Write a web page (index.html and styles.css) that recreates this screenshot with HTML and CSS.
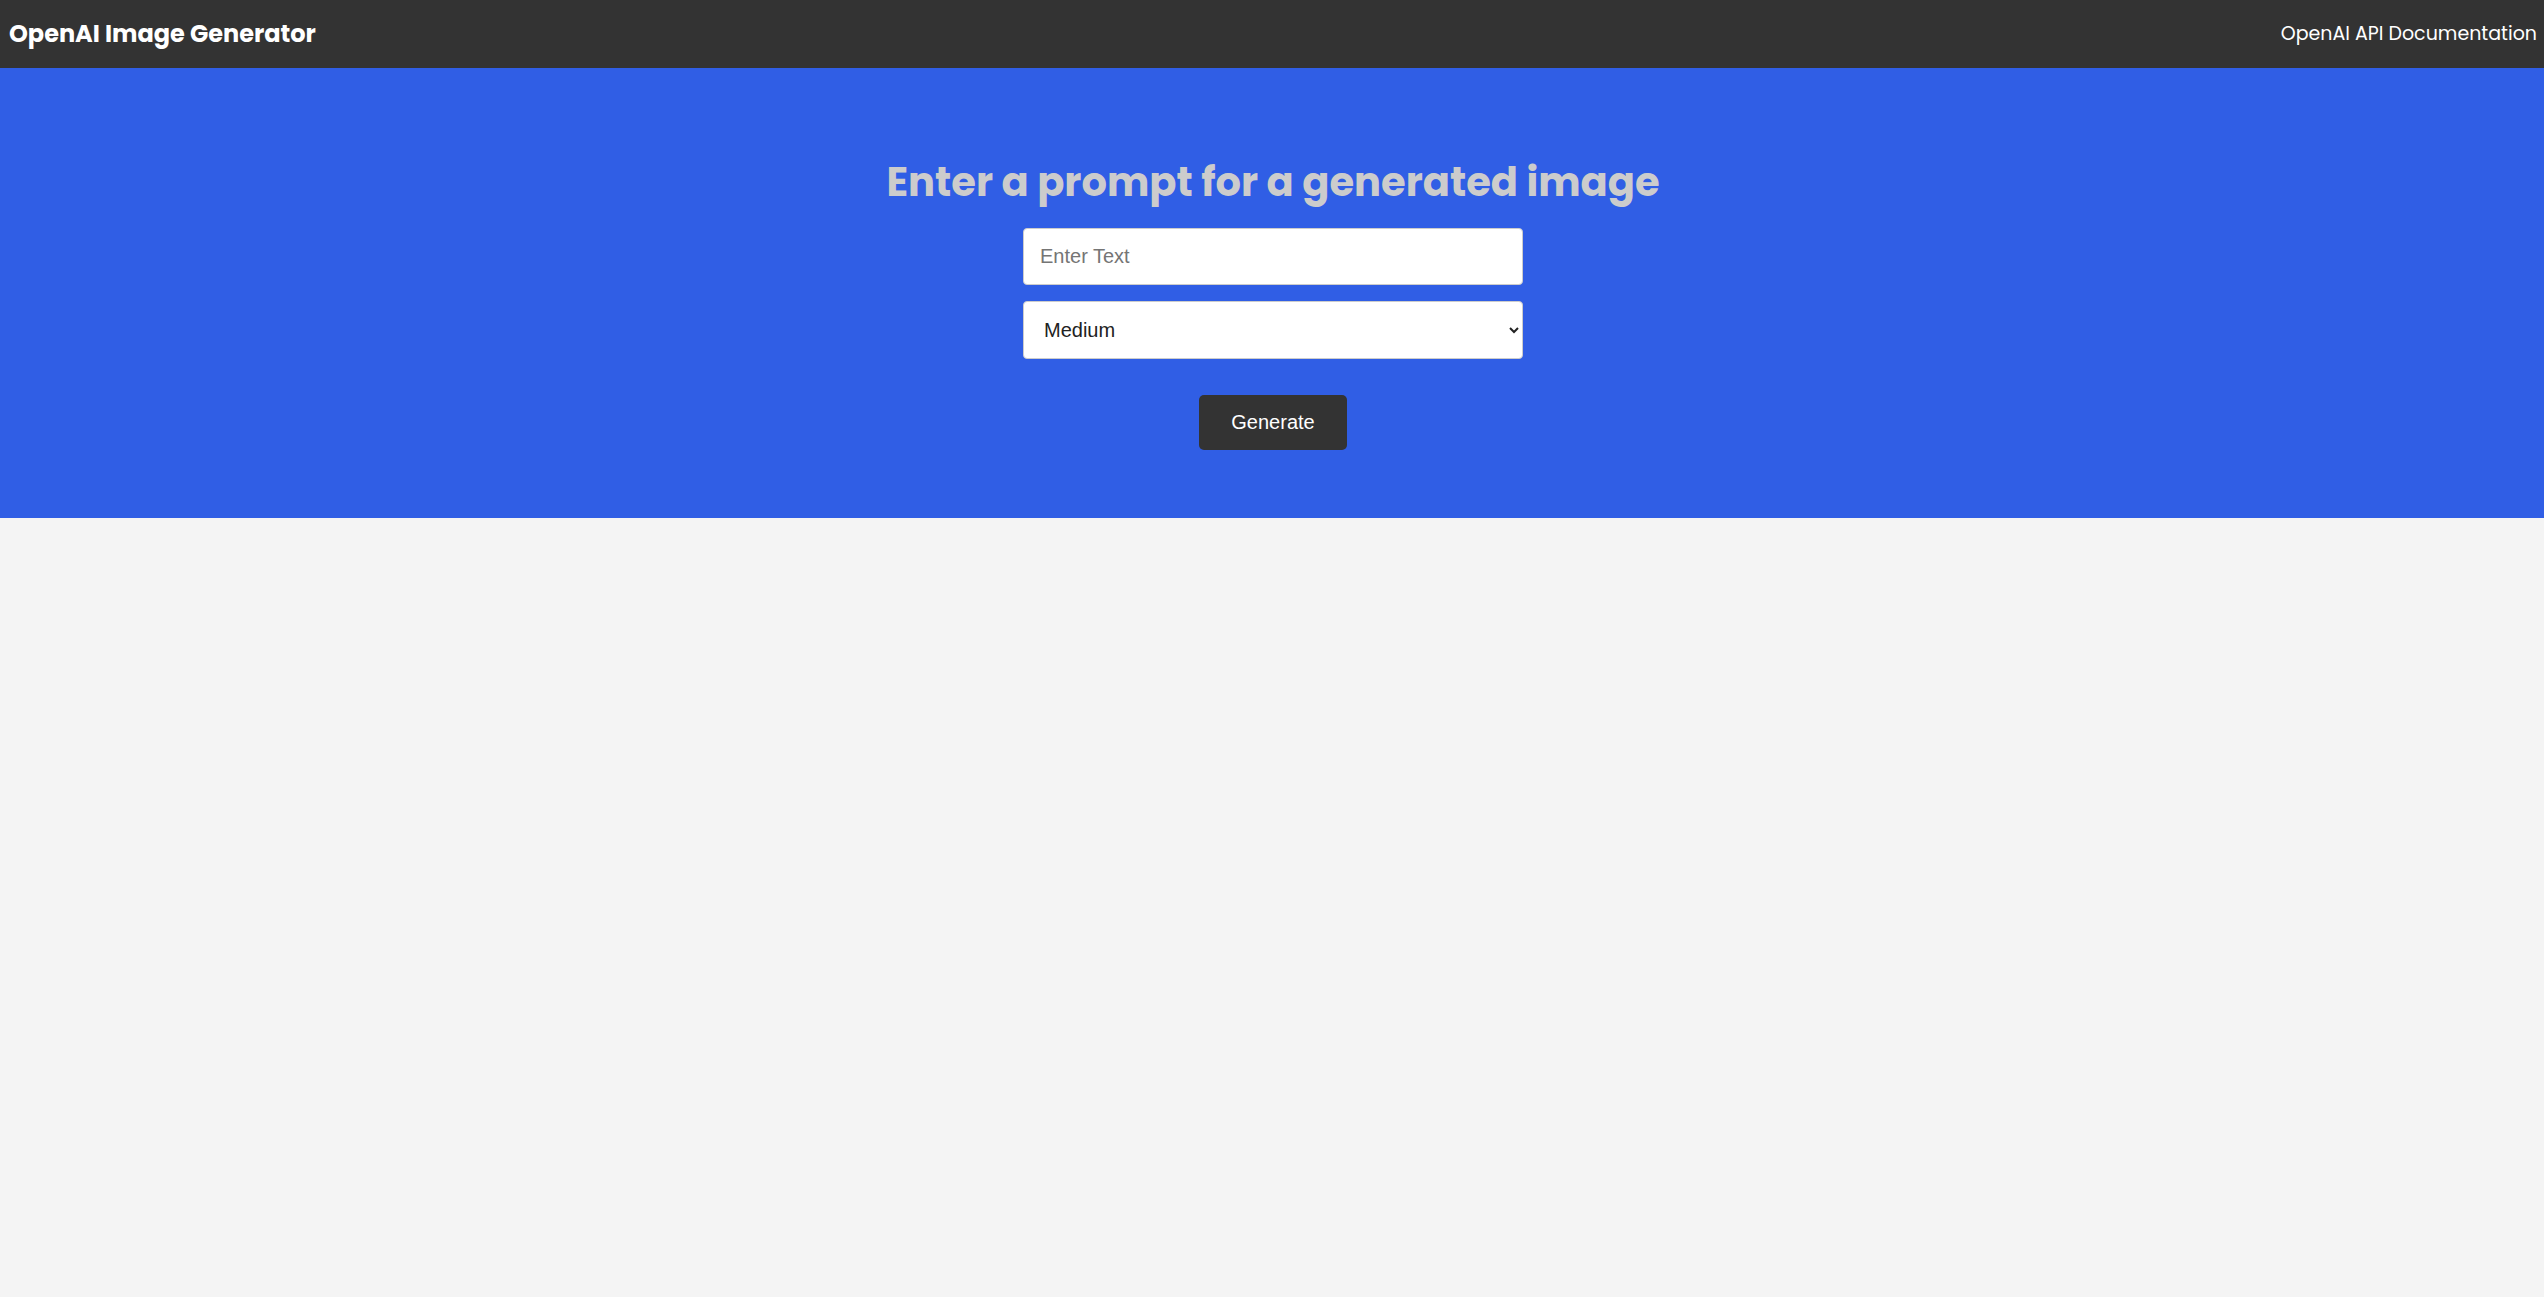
FILE: index.html
```html
<!DOCTYPE html>
<html lang="en">
<head>
  <meta charset="UTF-8">
  <meta name="viewport" content="width=device-width, initial-scale=1">
  <title>OpenAI Image Generator</title>
  <link rel="stylesheet" href="styles.css">
</head>
<body>
  <header class="header">
    <h2 class="brand">OpenAI Image Generator</h2>
    <a class="docs-link" href="https://beta.openai.com/docs">OpenAI API Documentation</a>
  </header>
  <main>
    <section class="showcase">
      <form class="image-form">
        <h1 class="form-title">Enter a prompt for a generated image</h1>
        <input class="control" type="text" placeholder="Enter Text" aria-label="Prompt">
        <select class="control" aria-label="Image size">
          <option value="small">Small</option>
          <option value="medium" selected>Medium</option>
          <option value="large">Large</option>
        </select>
        <button class="btn" type="submit">Generate</button>
      </form>
    </section>
  </main>
</body>
</html>
```
FILE: styles.css
```css
* {
  box-sizing: border-box;
}

body {
  margin: 0;
  background: #f4f4f4;
  font-family: Poppins, Inter, sans-serif;
  font-size: 19px;
}

.header {
  display: flex;
  justify-content: space-between;
  align-items: center;
  padding: 16px 7px 16px 9px;
  background: #333;
  color: #fff;
}

.brand {
  margin: 0;
  font-size: 24px;
  line-height: 36px;
}

.docs-link {
  color: #fff;
  line-height: 32px;
  text-decoration: none;
}

.showcase {
  padding: 84px 16px 68px 18px;
  background: #305ee5;
}

.image-form {
  display: flex;
  flex-direction: column;
  align-items: center;
}

.form-title {
  margin: 0 0 16px;
  color: #ccc;
  font-size: 40px;
  line-height: 60px;
  text-align: center;
}

.control {
  width: 100%;
  max-width: 500px;
  height: 57px;
  margin: 0 0 16px;
  padding: 16px;
  border: 1px solid #ccc;
  border-radius: 4px;
  background: #fff;
  color: #222;
  font-family: "Liberation Sans", Arial, sans-serif;
  font-size: 20px;
}

select.control {
  height: 58px;
}

.btn {
  margin-top: 20px;
  padding: 16px 32px;
  border: 0;
  border-radius: 5px;
  background: #333;
  color: #fff;
  font-family: "Liberation Sans", Arial, sans-serif;
  font-size: 20px;
  line-height: 23px;
  cursor: pointer;
}
```
